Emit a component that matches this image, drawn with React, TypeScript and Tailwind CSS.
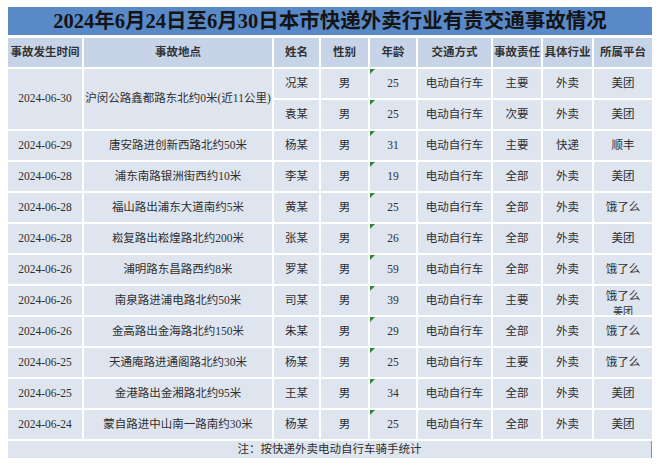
const rows = [
  { date: "2024-06-30", place: "沪闵公路鑫都路东北约0米(近11公里)", name: "况某", age: "25", duty: "主要", trade: "外卖", plat: "美团" },
  { date: "", place: "", name: "袁某", age: "25", duty: "次要", trade: "外卖", plat: "美团" },
  { date: "2024-06-29", place: "唐安路进创新西路北约50米", name: "杨某", age: "31", duty: "主要", trade: "快递", plat: "顺丰" },
  { date: "2024-06-28", place: "浦东南路银洲街西约10米", name: "李某", age: "19", duty: "全部", trade: "外卖", plat: "美团" },
  { date: "2024-06-28", place: "福山路出浦东大道南约5米", name: "黄某", age: "25", duty: "全部", trade: "外卖", plat: "饿了么" },
  { date: "2024-06-28", place: "崧复路出崧煌路北约200米", name: "张某", age: "26", duty: "全部", trade: "外卖", plat: "美团" },
  { date: "2024-06-26", place: "浦明路东昌路西约8米", name: "罗某", age: "59", duty: "全部", trade: "外卖", plat: "饿了么" },
  { date: "2024-06-26", place: "南泉路进浦电路北约50米", name: "司某", age: "39", duty: "主要", trade: "外卖", plat: "饿了么\n美团" },
  { date: "2024-06-26", place: "金高路出金海路北约150米", name: "朱某", age: "29", duty: "全部", trade: "外卖", plat: "饿了么" },
  { date: "2024-06-25", place: "天通庵路进通阁路北约30米", name: "杨某", age: "25", duty: "主要", trade: "外卖", plat: "饿了么" },
  { date: "2024-06-25", place: "金港路出金湘路北约95米", name: "王某", age: "34", duty: "全部", trade: "外卖", plat: "美团" },
  { date: "2024-06-24", place: "蒙自路进中山南一路南约30米", name: "杨某", age: "25", duty: "全部", trade: "外卖", plat: "美团" },
];

const headers = ["事故发生时间", "事故地点", "姓名", "性别", "年龄", "交通方式", "事故责任", "具体行业", "所属平台"];

const cell = "flex h-[29px] items-center justify-center bg-[#dee5ef] text-[11.5px] text-[#2f2f2f]";

export default function App() {
  return (
    <div className="min-h-screen bg-white pl-[8px] pt-[7px] font-['Liberation_Serif','Noto_Sans_CJK_SC',serif]">
      <div className="w-[644px]">
        {/* Title */}
        <div className="flex h-[28px] items-center justify-center bg-[#5a89c8] text-[20.5px] font-bold text-[#141414]">
          2024年6月24日至6月30日本市快递外卖行业有责交通事故情况
        </div>

        <div className="mt-[3px] grid grid-cols-[74px_188px_45px_47px_46px_73px_48px_49px_58px] gap-[2px] bg-white">
          {headers.map((h) => (
            <div
              key={h}
              className="flex h-[29px] items-center justify-center bg-[#c7d4e7] text-[11.5px] font-bold text-[#333]"
            >
              {h}
            </div>
          ))}

          {rows.map((r, i) => (
            <div key={i} className="contents">
              {i === 0 && (
                <>
                  <div className="row-span-2 flex items-center justify-center bg-[#dee5ef] text-[11.5px] text-[#2f2f2f]">
                    {r.date}
                  </div>
                  <div className="row-span-2 flex items-center justify-center whitespace-nowrap bg-[#dee5ef] text-[11.5px] text-[#2f2f2f]">
                    {r.place}
                  </div>
                </>
              )}
              {i > 1 && (
                <>
                  <div className={cell}>{r.date}</div>
                  <div className={cell}>{r.place}</div>
                </>
              )}
              <div className={cell}>{r.name}</div>
              <div className={cell}>男</div>
              <div className={`${cell} relative`}>
                <span className="absolute left-0 top-0 h-0 w-0 border-r-[5px] border-t-[5px] border-r-transparent border-t-[#2f8a2f]" />
                {r.age}
              </div>
              <div className={cell}>电动自行车</div>
              <div className={cell}>{r.duty}</div>
              <div className={cell}>{r.trade}</div>
              {r.plat.includes("\n") ? (
                <div className="flex h-[29px] flex-col items-center overflow-hidden bg-[#dee5ef] pt-[3px] text-[11.5px] leading-[15px] text-[#2f2f2f]">
                  <span>饿了么</span>
                  <span className="text-[10px]">美团</span>
                </div>
              ) : (
                <div className={cell}>{r.plat}</div>
              )}
            </div>
          ))}
        </div>

        {/* Footer note */}
        <div className="mt-[2px] flex h-[17px] items-center justify-center border-r border-[#8a8f99] bg-[#dee5ef] text-[11.5px] text-[#2f2f2f]">
          注：按快递外卖电动自行车骑手统计
        </div>
      </div>
    </div>
  );
}
